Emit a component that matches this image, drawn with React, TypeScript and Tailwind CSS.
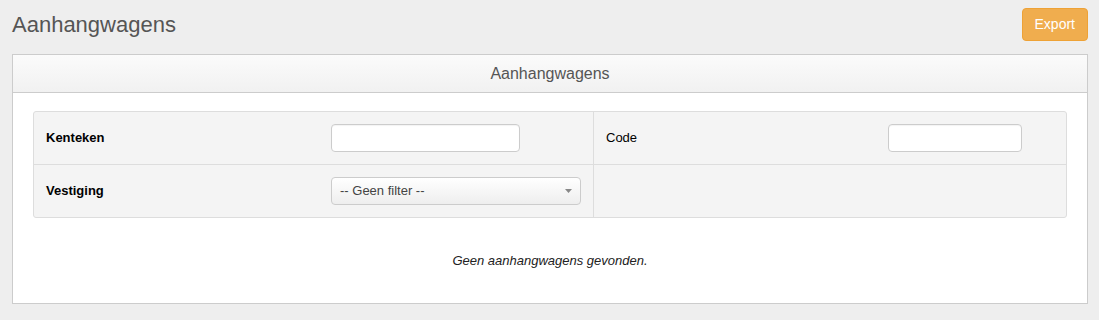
import React from "react";

export default function App() {
  return (
    <div
      className="min-h-[320px] bg-[#eeeeee] pl-[12px] pr-[11px] pt-[8px] text-[#333]"
      style={{ fontFamily: '"Liberation Sans", Arial, sans-serif' }}
    >
      <div className="flex h-[33px] items-center justify-between">
        <h1 className="text-[22px] leading-[26px] text-[#555]">Aanhangwagens</h1>
        <button className="h-[33px] rounded-[4px] border border-[#eea236] bg-[#f0ad4e] px-[12px] text-[14px] text-white">
          Export
        </button>
      </div>

      <div className="mt-[13px] border border-[#cccccc] bg-white">
        <div className="flex h-[38px] items-center justify-center border-b border-[#cccccc] bg-gradient-to-b from-[#fbfbfb] to-[#f1f1f1] text-[16px] text-[#555]">
          Aanhangwagens
        </div>
        <div className="px-[20px] pt-[18px]">
          <div className="overflow-hidden rounded-[3px] border border-[#dddddd] bg-[#f4f4f4] text-[13px] text-black">
            <div className="flex border-b border-[#dddddd]">
              <div className="flex h-[52px] w-[560px] items-center border-r border-[#dddddd]">
                <div className="w-[297px] pl-[12px] font-bold">Kenteken</div>
                <input
                  type="text"
                  className="h-[28px] w-[189px] rounded-[4px] border border-[#cccccc] bg-white shadow-[inset_0_1px_1px_rgba(0,0,0,0.05)] outline-none"
                />
              </div>
              <div className="flex h-[52px] flex-1 items-center">
                <div className="w-[294px] pl-[12px]">Code</div>
                <input
                  type="text"
                  className="h-[28px] w-[134px] rounded-[4px] border border-[#cccccc] bg-white shadow-[inset_0_1px_1px_rgba(0,0,0,0.05)] outline-none"
                />
              </div>
            </div>
            <div className="flex">
              <div className="flex h-[52px] w-[560px] items-center border-r border-[#dddddd]">
                <div className="w-[297px] pl-[12px] font-bold">Vestiging</div>
                <div className="flex h-[28px] w-[250px] items-center justify-between rounded-[4px] border border-[#cccccc] bg-gradient-to-b from-white to-[#eeeeee] pl-[8px] pr-[8px] text-[#444]">
                  <span>-- Geen filter --</span>
                  <svg width="7" height="4" viewBox="0 0 7 4">
                    <polygon points="0,0 7,0 3.5,4" fill="#888" />
                  </svg>
                </div>
              </div>
              <div className="h-[52px] flex-1" />
            </div>
          </div>
          <p className="pb-[33px] pt-[34px] text-center text-[13px] italic leading-[18px] text-[#222]">
            Geen aanhangwagens gevonden.
          </p>
        </div>
      </div>
    </div>
  );
}
